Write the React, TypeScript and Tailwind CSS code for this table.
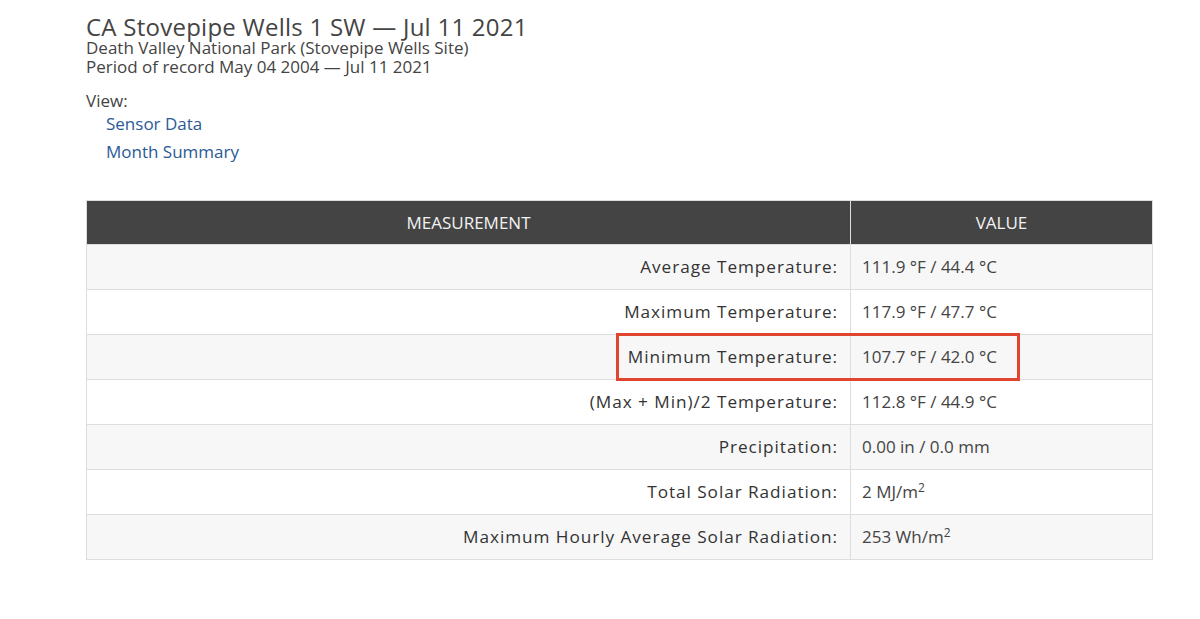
const rows: { label: string; value: React.ReactNode }[] = [
  { label: "Average Temperature:", value: "111.9 °F / 44.4 °C" },
  { label: "Maximum Temperature:", value: "117.9 °F / 47.7 °C" },
  { label: "Minimum Temperature:", value: "107.7 °F / 42.0 °C" },
  { label: "(Max + Min)/2 Temperature:", value: "112.8 °F / 44.9 °C" },
  { label: "Precipitation:", value: "0.00 in / 0.0 mm" },
  {
    label: "Total Solar Radiation:",
    value: (
      <>
        2 MJ/m<sup className="text-[12px]">2</sup>
      </>
    ),
  },
  {
    label: "Maximum Hourly Average Solar Radiation:",
    value: (
      <>
        253 Wh/m<sup className="text-[12px]">2</sup>
      </>
    ),
  },
];

export default function App() {
  return (
    <div
      className="min-h-[619px] bg-white pl-[86px] pt-[16px] text-[#444]"
      style={{ fontFamily: '"Open Sans", "Liberation Sans", sans-serif' }}
    >
      {/* Header */}
      <h1 className="text-[24px] leading-[22px] tracking-[0.25px] text-[#444]">
        CA Stovepipe Wells 1 SW — Jul 11 2021
      </h1>
      <div className="text-[17px] leading-[19px] text-[#444]">
        <p>Death Valley National Park (Stovepipe Wells Site)</p>
        <p>Period of record May 04 2004 — Jul 11 2021</p>
      </div>

      {/* View links */}
      <div className="mt-[11px] text-[17px] leading-[28px]">View:</div>
      <ul className="-mt-[5px] pl-[20px] text-[17px] leading-[28px] text-[#2a5a96]">
        <li>
          <a href="#">Sensor Data</a>
        </li>
        <li>
          <a href="#">Month Summary</a>
        </li>
      </ul>

      {/* Table */}
      <div className="relative mt-[34px] w-[1067px]">
        <table className="w-full table-fixed border-collapse text-[17px]">
          <thead>
            <tr className="h-[44px] bg-[#444] text-[#f2f2f2]">
              <th className="w-[764px] border border-[#ddd] font-normal">MEASUREMENT</th>
              <th className="border border-[#ddd] font-normal">VALUE</th>
            </tr>
          </thead>
          <tbody>
            {rows.map((r, i) => (
              <tr key={r.label} className={`h-[45px] ${i % 2 === 0 ? "bg-[#f7f7f7]" : "bg-white"}`}>
                <td className="border border-[#ddd] pr-[12px] text-right text-[17.2px] tracking-[0.95px] text-[#333]">
                  {r.label}
                </td>
                <td className="border border-[#ddd] pl-[11px] text-[17px] text-[#444]">{r.value}</td>
              </tr>
            ))}
          </tbody>
        </table>

        {/* Highlight annotation */}
        <div className="pointer-events-none absolute left-[530px] top-[133px] h-[48px] w-[404px] border-[3px] border-[#e0452f]" />
      </div>
    </div>
  );
}
